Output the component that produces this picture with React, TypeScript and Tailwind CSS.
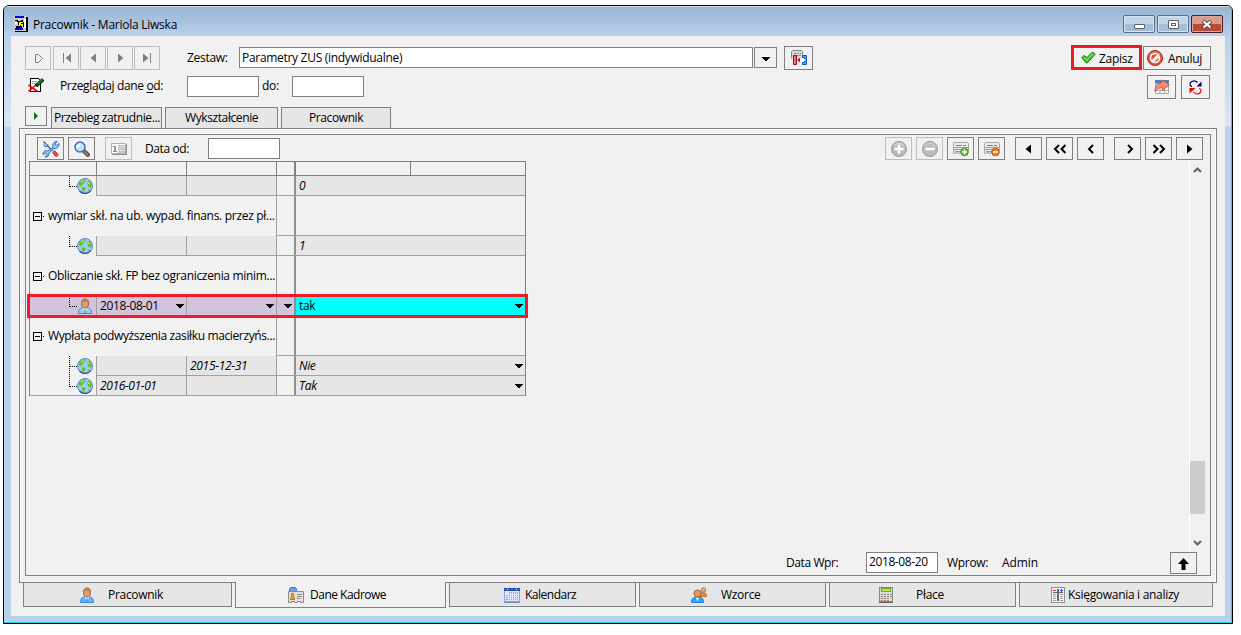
import React from "react";
import clsx from "clsx";

interface IconProps {
  className?: string;
}

interface ToolButtonProps {
  className?: string;
  disabled?: boolean;
  children?: React.ReactNode;
}

// 16x16 toolbar icon canvas
const Icon: React.FC<{ className?: string; children: React.ReactNode }> = ({
  className,
  children,
}) => (
  <svg
    width="16"
    height="16"
    viewBox="0 0 16 16"
    fill="none"
    className={clsx("shrink-0", className)}
  >
    {children}
  </svg>
);

const AppIcon = () => (
  <svg width="14" height="16" viewBox="0 0 14 16" shapeRendering="crispEdges">
    <path fill="#c8ccd0" d="M0 0h13v15H0z" />
    <path fill="#0000e0" d="M1 0h9v2H1zM1 12h8v2H1z" />
    <path fill="#000" d="M12 1h2v15H1v-1h11zM1 4h3v1H1zM3 5h4v1H3zM7 4h2v2H7zM9 6h1v5H9zM2 10h6v2H2zM4 6h1v3H4z" />
    <path fill="#fff" d="M1 6h2v2H1zM10 3h2v9h-2z" />
    <path fill="#ffff00" d="M5 6h4v4H5z" />
    <path fill="#000" d="M7 7h2v1H7zM6 9h1v1H6z" />
  </svg>
);

const GlobeIcon: React.FC<IconProps> = ({ className }) => (
  <Icon className={className}>
    <circle cx="8" cy="8" r="7.500" fill="#a4cbf6" stroke="#5b87d0" />
    <path d="M2.500 13a7.500 7.500 0 0 0 11.500-.5" stroke="#2846a8" strokeWidth="1.200" />
    <path
      fill="#62c232"
      d="M2 4.500 5 1.500l3.500-.3L9 3 7 4.500 6.800 6 5 7 3.500 8.500 1.500 7zM4.500 9.500 7 9l2 2-1.500 1.500-.5 2L5.500 14zM10.500 3.500l2-1L14 5l1 3-1.500 2-2.500-1.500L10.500 6.500zM11 11.500l2-.5-1 2-1.500.5z"
    />
    <path fill="#b8ec8a" d="M4 3.500 6 2l1.500.500-2.500 2zM11 4.500h1.500v1.500H11z" />
  </Icon>
);

const PersonIcon: React.FC<IconProps & { pale?: boolean }> = ({ className, pale }) => (
  <Icon className={className}>
    <path
      fill={pale ? "#9ad0ee" : "#5cb2fb"}
      stroke={pale ? "#4b8cb8" : "#3a8ee0"}
      d="M1.500 15.500c0-4 1.500-5.500 4-5.500h5c2.500 0 4 1.500 4 5.500z"
    />
    <path fill="#fff" d="m5.500 10 2.500 4 2.500-4z" />
    <path fill="#3a78b8" d="M7.500 11h1v4h-1z" />
    <ellipse cx="8" cy="5.500" rx="3.500" ry="4.500" fill="#d9a06e" stroke="#9c5f38" />
    <path fill="#b87848" d="M4.500 4C5 1.500 6.500 1 8 1s3 .5 3.500 3C9 3 7 3 4.500 4z" />
  </Icon>
);

const PeopleIcon = () => (
  <Icon>
    <path fill="#f08a32" stroke="#c05a18" strokeWidth=".8" d="M9 9.500c0-3 1-4 3-4s3.600 1 3.600 4z" />
    <circle cx="12.500" cy="3" r="2.200" fill="#e3b58a" stroke="#a0653d" strokeWidth=".8" />
    <path fill="#35a2f5" stroke="#2482d8" d="M.5 15.500c0-4 1.500-5 3.500-5h5c2 0 3.500 1 3.500 5z" />
    <path fill="#fff" d="m5 10.500 1.500 4 1.500-4z" />
    <circle cx="6.500" cy="6.500" r="3.500" fill="#d69c6b" stroke="#9c5f38" />
  </Icon>
);

const CardIcon = () => (
  <Icon>
    <path fill="#6f9cf2" stroke="#3f6fd8" d="M1.500 4.500V1.500l1-1h5l1 2v2z" />
    <path fill="#e0e0e0" stroke="#8c8c8c" d="M.5 4.500h15v11h-3v-1h-3v1h-3v-1h-3v1h-3z" />
    <path fill="#f8e0a0" d="M2 6h5v7H2z" />
    <circle cx="4.500" cy="7.500" r="1.200" stroke="#8c4f10" />
    <path fill="#e8a020" stroke="#a06010" strokeWidth=".8" d="M2.500 12.500c0-2 .7-3 2-3s2 1 2 3z" />
    <path stroke="#8c8c8c" d="M9 7.500h5M9 9.500h5M9 11.500h3" />
  </Icon>
);

const CalendarIcon = () => (
  <Icon>
    <path fill="#dce6f8" stroke="#8ba4d4" d="M.5 2.500h15v12H.5z" />
    <path fill="#2a50b0" d="M0 1h16v3H0z" />
    <path fill="#fff" d="M3 2h1v1H3zM12 2h1v1h-1z" />
    <path fill="#8fa6e0" d="M5 5h9v8H2V7h3z" />
    <path
      stroke="#eef3ff"
      strokeWidth=".8"
      d="M2 7.500h12M2 9.500h12M2 11.500h12M4.500 5v8M6.500 5v8M8.500 5v8M10.500 5v8M12.500 5v8"
    />
    <path fill="#6b86b8" d="M0 15h16v1H0z" />
  </Icon>
);

const CalculatorIcon = () => (
  <svg width="14" height="16" viewBox="0 0 14 16" fill="none" shapeRendering="crispEdges">
    <path fill="#dcdcdc" stroke="#888" d="M.5.5h13v14H.5z" />
    <path fill="#b4e850" stroke="#7ca030" d="M2.500 1.500h9v3h-9z" />
    <path stroke="#888" strokeDasharray="2 1" d="M2 7.500h11M2 9.500h11M2 11.500h9" />
    <path stroke="#d07838" strokeDasharray="2 1" d="M2 13.500h9" />
    <path stroke="#606060" d="M0 15.500h14" />
  </svg>
);

const LedgerIcon = () => (
  <svg width="14" height="16" viewBox="0 0 14 16" fill="none" shapeRendering="crispEdges">
    <path fill="#f4f4f4" stroke="#909090" d="M.5.5h13v15H.5z" />
    <path fill="#666" d="M6 2h2v12H6zM2 5h10v1H2z" />
    <path stroke="#a0a0a0" d="M2 7.500h3M2 9.500h3M2 11.500h3M2 13.500h3M9 7.500h3M9 9.500h3M9 11.500h3M9 13.500h3" />
    <path fill="#f02020" d="M2 3h3v1H2z" />
    <path fill="#1060f0" d="M10 2h1v1h1v1h-1v1h-1V4H9V3h1z" />
  </svg>
);

const SaveCheckIcon = () => (
  <svg width="15" height="13" viewBox="0 0 15 13" fill="none">
    <path
      fill="#43c82b"
      stroke="#187a12"
      strokeLinejoin="round"
      d="M.8 6.500 3 4.500l3 2 5.500-5.500 2.700 2.200L6.500 11.800H5z"
    />
    <path stroke="#98ea80" d="m2.500 6 3.300 3L12 2.500" />
  </svg>
);

const CancelIcon = () => (
  <Icon>
    <circle cx="8" cy="8" r="7.500" fill="#e2543c" stroke="#a82c1c" />
    <circle cx="8" cy="8" r="4.500" stroke="#fff" strokeWidth="1.600" />
    <path stroke="#fff" strokeWidth="1.600" d="m5 11 6-6M6.500 11.500l5-5" />
    <path stroke="#f49a88" strokeWidth=".8" d="M2.500 6A6 6 0 0 1 13 4.500" />
  </Icon>
);

const PrintSheetIcon = () => (
  <Icon>
    <path fill="#4f80b4" d="M1 1h14v4H1z" />
    <path fill="#f6f6f6" stroke="#a8a8a8" d="M1.500 4.500h13v10h-13zM6 5v9M10.500 5v9M1 11.500h13" />
    <path
      fill="#f88c70"
      stroke="#d04838"
      strokeWidth=".8"
      d="M1 12.500c0-6 2.500-8.500 6.500-8.500V.8L15.500 6l-7 5.300V8.500C5.500 8.500 3 9.500 1 12.500z"
    />
  </Icon>
);

const RefreshIcon = () => (
  <svg width="13" height="15" viewBox="0 0 13 15" fill="none">
    <path stroke="#000080" strokeWidth="1.200" d="M3 6.500C1 6.500.8 4.500 1.300 3 2 1.200 3.500.8 5 .8S7.500 1.500 8.500 2.500" />
    <path fill="#000080" d="M12.500 1.500v5h-5z" />
    <path stroke="#f00" strokeWidth="1.200" d="M10 8.500c2 0 2.200 2 1.700 3.200-.7 1.800-2.200 2.300-3.700 2.300s-2.500-.8-3.500-1.800" />
    <path fill="#f00" d="M.5 13.500v-5.500h6z" />
  </svg>
);

const NotesIcon = () => (
  <Icon>
    <path fill="#fff" stroke="#000" d="M2.500 1.500h8l2 2v11h-10z" shapeRendering="crispEdges" />
    <path stroke="#999" d="M4 4.500h5M4 6.500h4" />
    <path stroke="#f00" strokeWidth="1.600" d="m.5 8 9 6.500M8 8 .5 14.500" />
    <path stroke="#000" strokeWidth="3.400" d="m8 9 7-6.500" />
    <path stroke="#148a14" strokeWidth="2" d="m9 8 6-6" />
  </Icon>
);

const ToolsIcon = () => (
  <svg width="18" height="18" viewBox="0 0 18 18" fill="none">
    <path stroke="#b02020" strokeWidth="3.400" d="m11.500 11.500 4 4.500" />
    <path stroke="#f06060" strokeWidth="1.500" d="m11.500 11.500 4 4.500" />
    <path stroke="#506880" strokeWidth="1.500" d="m1.500 1.500 9 9.500" />
    <path
      fill="#8cc8fa"
      stroke="#1f62b8"
      strokeWidth=".9"
      d="M11 7.500c-1-3 .5-6 4-6L13 4l1.500 1.500L17 3.500c.5 3-1.500 5.500-5 5L7 13c.5 2.500-1.500 4.500-4 4l2-2.500L3.500 13 1 14.500C.5 12 3 10 5.500 11z"
    />
    <path fill="#8cc8fa" stroke="#1f62b8" strokeWidth=".9" d="M1.500 4.500 3.500 7 6 6 5 4" />
  </svg>
);

const SearchIcon = () => (
  <Icon>
    <path stroke="#5c4038" strokeWidth="4.200" strokeLinecap="round" d="m10.500 10.500 3.300 3.300" />
    <path stroke="#a88070" strokeWidth="1.800" strokeLinecap="round" d="m10.500 10.500 3.300 3.300" />
    <circle cx="6" cy="6" r="5" fill="#c0e4fc" stroke="#3870c0" strokeWidth="1.500" />
    <path fill="#eef9ff" d="M3 6c0-2 1-3 3-3l1 1-3 3z" />
  </Icon>
);

const CounterIcon = () => (
  <svg width="16" height="12" viewBox="0 0 16 12" fill="none" shapeRendering="crispEdges">
    <path fill="#fff" stroke="#b0b0b0" d="M.5.500h14v10H.5z" />
    <path fill="#c4c4c4" d="M7 2h7v8H7z" />
    <path stroke="#f0f0f0" strokeDasharray="1 1" d="M7 3.500h7M8 5.500h6M7 7.500h7" />
    <path fill="#909090" d="M3 3h2v5h1v1H2V8h1V4H2V3zM15 1h1v11H1v-1h14z" />
  </svg>
);

const ClipIcon = () => (
  <Icon>
    <path fill="#d8d8e0" stroke="#888" d="M.5 8.500v-7l1-1h9l1 1v7" />
    <path stroke="#888" strokeDasharray="2 1" d="M3 3.500h7M2 5.500h8" />
    <path fill="#e87868" stroke="#a01010" d="M2.500 5.500h3v9h-3z" />
    <path fill="#b01818" d="m6 10 3-2.200v4.400z" />
    <path fill="#50a0f0" stroke="#0a60c0" d="M11.500 5.500h4v9h-4v-2h2v-5h-2z" />
    <path fill="#fff" d="M11 8h1v1h2v2h-2v1h-1z" />
  </Icon>
);

const RoundIcon: React.FC<{ plus?: boolean }> = ({ plus }) => (
  <Icon>
    <circle cx="8" cy="8" r="7.500" fill="#bcbcbc" stroke="#989898" />
    <path stroke="#fff" strokeWidth="2.400" d={plus ? "M3.500 8h9M8 3.500v9" : "M3.500 8h9"} />
    <path stroke="#d8d8d8" d="M3 5a6 6 0 0 1 10 0" />
  </Icon>
);

const ListIcon: React.FC<{ plus?: boolean }> = ({ plus }) => (
  <Icon>
    <path fill="#ececec" stroke="#a8a8a8" d="M.5 12.500V3l1-1.500h13l1 1.500v7M.5 12.500h2v-1h2v1h2v-1h2" />
    <path stroke="#7f7f7f" d="M3 4.500h6M10 4.500h3" />
    <path stroke="#f07878" d="M1 6.500h14" />
    <path stroke="#8098e0" d="M1 8.500h10M2 10.500h6" />
    <circle
      cx="11.500"
      cy="11"
      r="3.800"
      fill={plus ? "#5cb82c" : "#ee8220"}
      stroke={plus ? "#4a9820" : "#b85c10"}
    />
    <path stroke="#fff" strokeWidth="1.500" d={plus ? "M9 11h5M11.500 8.500v5" : "M9 11h5"} />
  </Icon>
);

// filled media style arrow, points right unless flipped
const Triangle: React.FC<IconProps & { bar?: boolean; flip?: boolean }> = ({
  className,
  bar,
  flip,
}) => (
  <svg
    width="9"
    height="10"
    viewBox="0 0 9 10"
    fill="currentColor"
    className={clsx(flip && "-scale-x-100", className)}
  >
    <path d={bar ? "M0 .500v9L5.500 5z" : "M2 .500v9L7.500 5z"} />
    {bar && <path d="M7 0h1v10H7z" />}
  </svg>
);

const Chevron: React.FC<{ double?: boolean; flip?: boolean }> = ({ double, flip }) => (
  <svg
    width="14"
    height="10"
    viewBox="0 0 14 10"
    fill="none"
    stroke="#000"
    strokeWidth="2"
    className={clsx(flip && "-scale-x-100")}
  >
    <path d={double ? "m1.500 1 4 4-4 4M8 1l4 4-4 4" : "m5 1 4 4-4 4"} />
  </svg>
);

const DropArrow: React.FC<IconProps> = ({ className }) => (
  <svg
    width="8"
    height="4"
    viewBox="0 0 8 4"
    shapeRendering="crispEdges"
    className={clsx("shrink-0", className)}
  >
    <path d="M0 0h8v1H7v1H6v1H5v1H3V3H2V2H1V1H0z" />
  </svg>
);

const ToolButton: React.FC<ToolButtonProps> = ({ className, disabled, children }) => (
  <button
    className={clsx(
      "flex shrink-0 items-center justify-center border",
      disabled ? "border-[#bdbdbd] text-[#808080]" : "border-[#808080] text-black",
      className
    )}
  >
    {children}
  </button>
);

const Field: React.FC<{ className?: string; value?: string }> = ({ className, value }) => (
  <div
    className={clsx(
      "shrink-0 border border-[#808080] bg-white pl-[2px]",
      className
    )}
  >
    {value}
  </div>
);

const TitleBar = () => (
  <div className="flex h-[30px] shrink-0 items-start border-t border-[#d4e2f1] bg-linear-to-b from-[#9ab4d2] to-[#b9d1ea] pr-[8px] pl-[10px]">
    <div className="mt-[9px] flex">
      <AppIcon />
    </div>
    <span className="mt-[9px] ml-[5px] leading-[18px] tracking-[-0.25px]">
      Pracownik - Mariola Liwska
    </span>
    <div className="mt-[8px] ml-auto flex gap-[2px]">
      <div className="flex h-[18px] w-8 items-center justify-center rounded-[2px] border border-[#5b6f8a] bg-linear-to-b from-[#c3d5ea] from-50% to-[#a5bdd9] to-50% shadow-[inset_0_0_0_1px_#d6e4f3]">
        <div className="mt-[4px] h-[5px] w-[11px] rounded-[1px] border border-[#5a5f6b] bg-white" />
      </div>
      <div className="flex h-[18px] w-8 items-center justify-center rounded-[2px] border border-[#5b6f8a] bg-linear-to-b from-[#c3d5ea] from-50% to-[#a5bdd9] to-50% shadow-[inset_0_0_0_1px_#d6e4f3]">
        <div className="flex h-[9px] w-[11px] items-center justify-center rounded-[1px] border border-[#5a5f6b] bg-white">
          <div className="h-[3px] w-[5px] border border-[#5a5f6b]" />
        </div>
      </div>
      <div className="flex h-[18px] w-8 items-center justify-center rounded-[2px] border border-[#4f1c20] bg-linear-to-b from-[#d99a8f] from-50% to-[#bb4a35] to-50% shadow-[inset_0_0_0_1px_#e0a89c]">
        <svg width="12" height="9" viewBox="0 0 12 9" fill="none">
          <path stroke="#5a4a58" strokeWidth="4" d="m2 1 8 7M10 1 2 8" />
          <path stroke="#fff" strokeWidth="2.200" d="m2.500 1.500 7 6M9.500 1.500l-7 6" />
        </svg>
      </div>
    </div>
  </div>
);

const RecordToolbar = () => (
  <div className="mt-[9px] flex h-[25px] shrink-0 items-start pl-[14px]">
    <div className="mt-px flex gap-px">
      <ToolButton disabled className="mr-px h-6 w-[26px]">
        <svg width="9" height="9" viewBox="0 0 9 9" fill="none" stroke="#808080">
          <path d="M1.500.500h3l4 4-4 4h-3z" />
        </svg>
      </ToolButton>
      <ToolButton disabled className="h-6 w-[26px]">
        <Triangle bar flip />
      </ToolButton>
      <ToolButton disabled className="h-6 w-[26px]">
        <Triangle flip />
      </ToolButton>
      <ToolButton disabled className="h-6 w-[26px]">
        <Triangle />
      </ToolButton>
      <ToolButton disabled className="h-6 w-[26px]">
        <Triangle bar />
      </ToolButton>
    </div>
    <span className="ml-[27px] w-[52px] leading-[25px]">Zestaw:</span>
    <Field
      className="mt-[2px] h-[21px] w-[514px] leading-[19px]"
      value="Parametry ZUS (indywidualne)"
    />
    <ToolButton className="mt-[2px] ml-px h-[21px] w-[23px]">
      <DropArrow className="mt-[2px]" />
    </ToolButton>
    <ToolButton className="mt-px ml-[7px] h-6 w-[29px]">
      <ClipIcon />
    </ToolButton>
    <button className="ml-[258px] flex h-[25px] w-[71px] items-center border-3 border-[#ed1c24] pl-[7px]">
      <SaveCheckIcon />
      <span className="ml-[3px] pt-[3px]">Zapisz</span>
    </button>
    <ToolButton className="mt-px ml-px h-6 w-[68px] justify-start! pl-[3px]">
      <CancelIcon />
      <span className="ml-[5px] pt-px">Anuluj</span>
    </ToolButton>
  </div>
);

const DateFilter = () => (
  <div className="mt-[5px] flex h-6 shrink-0 items-start pl-[17px]">
    <div className="mt-[2px] flex w-8">
      <NotesIcon />
    </div>
    <span className="w-[127px] leading-[22px] tracking-[-0.35px]">
      Przeglądaj dane <u className="underline-offset-2">o</u>d:
    </span>
    <Field className="mt-px h-[21px] w-[72px]" />
    <span className="ml-[3px] w-[30px] leading-[22px]">do:</span>
    <Field className="mt-px h-[21px] w-[72px]" />
    <div className="ml-auto flex gap-[5px] pr-[15px]">
      <ToolButton className="h-6 w-[29px]">
        <PrintSheetIcon />
      </ToolButton>
      <ToolButton className="h-6 w-[29px]">
        <RefreshIcon />
      </ToolButton>
    </div>
  </div>
);

const TopTabs = () => (
  <div className="mt-[7px] flex h-[22px] shrink-0 items-start pl-[14px]">
    <ToolButton className="h-5 w-[22px]">
      <svg width="4" height="8" viewBox="0 0 4 8" className="mr-px mb-px">
        <path fill="#008000" d="M0 0v8l4-4z" />
      </svg>
    </ToolButton>
    <div className="mt-px ml-[4px] flex gap-[3px] leading-5">
      <div className="h-[21px] w-[111px] border border-b-0 border-[#808080] bg-[#e6e6e6] pl-[2px] tracking-[-0.38px]">
        Przebieg zatrudnie...
      </div>
      <div className="h-[21px] w-[113px] border border-b-0 border-[#808080] bg-[#e6e6e6] pl-[19px] tracking-[-0.4px]">
        Wykształcenie
      </div>
      <div className="h-[21px] w-[110px] border border-b-0 border-[#808080] bg-[#e6e6e6] pl-[27px] tracking-[-0.4px]">
        Pracownik
      </div>
    </div>
  </div>
);

const GridToolbar = () => (
  <div className="mt-[2px] flex h-[23px] shrink-0 items-start pr-[7px] pl-[11px]">
    <ToolButton className="h-[23px] w-[27px]">
      <ToolsIcon />
    </ToolButton>
    <ToolButton className="ml-[4px] h-[23px] w-[27px]">
      <SearchIcon />
    </ToolButton>
    <ToolButton disabled className="ml-[10px] h-[23px] w-[27px]">
      <CounterIcon />
    </ToolButton>
    <span className="ml-[13px] w-[63px] leading-6 tracking-[-0.4px]">Data od:</span>
    <Field className="mt-px h-[21px] w-[72px]" />
    <div className="ml-auto flex gap-[4px]">
      <ToolButton disabled className="h-[23px] w-[27px]">
        <RoundIcon plus />
      </ToolButton>
      <ToolButton disabled className="h-[23px] w-[27px]">
        <RoundIcon />
      </ToolButton>
      <ToolButton className="h-[23px] w-[27px]">
        <ListIcon plus />
      </ToolButton>
      <ToolButton className="h-[23px] w-[27px]">
        <ListIcon />
      </ToolButton>
    </div>
    <div className="ml-[10px] flex gap-[4px]">
      <ToolButton className="h-[23px] w-[27px]">
        <Triangle flip />
      </ToolButton>
      <ToolButton className="h-[23px] w-[27px]">
        <Chevron double flip />
      </ToolButton>
      <ToolButton className="h-[23px] w-[27px]">
        <Chevron flip />
      </ToolButton>
    </div>
    <div className="ml-[10px] flex gap-[4px]">
      <ToolButton className="h-[23px] w-[27px] pl-[5px]">
        <Chevron />
      </ToolButton>
      <ToolButton className="h-[23px] w-[27px]">
        <Chevron double />
      </ToolButton>
      <ToolButton className="h-[23px] w-[27px]">
        <Triangle />
      </ToolButton>
    </div>
  </div>
);

interface EntryRowProps {
  from?: string;
  to?: string;
  value: string;
  selected?: boolean;
  dropdown?: boolean;
  branch?: "end" | "middle";
  last?: boolean;
}

const EntryRow: React.FC<EntryRowProps> = ({
  from,
  to,
  value,
  selected,
  dropdown,
  branch = "end",
  last,
}) => (
  <div
    className={clsx(
      "flex h-5 leading-[18px]",
      selected ? "bg-[#d3c3dd]" : "italic"
    )}
  >
    <div
      className={clsx(
        "flex w-[66px] shrink-0 pl-[39px]",
        last && "border-b border-[#a0a0a0]"
      )}
    >
      <svg width="8" height="20" viewBox="0 0 8 20" stroke="#000" strokeDasharray="1 1">
        <path d={branch === "middle" ? "M.500 0v20" : "M.500 0v11"} />
        <path d="M1 10.500h7" />
      </svg>
      {selected ? <PersonIcon pale className="mt-[2px]" /> : <GlobeIcon className="mt-[2px]" />}
    </div>
    <div
      className={clsx(
        "flex w-[90px] shrink-0 items-center border-b border-l border-[#a0a0a0] pr-[2px] pl-[3px] tracking-[-0.38px]",
        !selected && "bg-[#e6e6e6]"
      )}
    >
      {from}
      {selected && <DropArrow className="ml-auto" />}
    </div>
    <div
      className={clsx(
        "flex w-[90px] shrink-0 items-center border-b border-l border-[#a0a0a0] pr-[2px] pl-[3px]",
        !selected && "bg-[#e6e6e6]"
      )}
    >
      {to}
      {selected && <DropArrow className="ml-auto" />}
    </div>
    <div className="flex w-[18px] shrink-0 items-center border-b border-l border-[#a0a0a0] pl-[7px]">
      {selected && <DropArrow />}
    </div>
    <div
      className={clsx(
        "flex flex-1 items-center border-b border-l-2 border-b-[#a0a0a0] border-l-[#909090] pr-[2px] pl-[3px]",
        selected ? "bg-[#00ffff]" : "bg-[#e6e6e6]"
      )}
    >
      {value}
      {dropdown && <DropArrow className="ml-auto" />}
    </div>
  </div>
);

const GroupRow: React.FC<{ label: string; labelClass?: string }> = ({ label, labelClass }) => (
  <div className="flex h-10">
    <div className="flex w-[246px] shrink-0 items-center pl-[3px] whitespace-nowrap">
      <svg
        width="13"
        height="9"
        viewBox="0 0 13 9"
        fill="none"
        stroke="#000"
        shapeRendering="crispEdges"
        className="mt-px shrink-0"
      >
        <path d="M.500.500h8v8h-8zM2 4.500h5M10 4.500h1" />
      </svg>
      <span className={clsx("ml-[2px]", labelClass)}>{label}</span>
    </div>
    <div className="w-[18px] shrink-0 border-b border-l border-[#a0a0a0]" />
    <div className="flex-1 border-b border-l-2 border-b-[#a0a0a0] border-l-[#909090]" />
  </div>
);

const ParameterGrid = () => (
  <div className="relative ml-[3px] h-[235px] w-[497px] border-x border-[#808080]">
    <div className="flex h-[15px] border-y border-[#808080]">
      <div className="w-[67px] border-r border-[#808080]" />
      <div className="w-[90px] border-r border-[#808080]" />
      <div className="w-[90px] border-r border-[#808080]" />
      <div className="w-[19px] border-r-2 border-[#808080]" />
      <div className="w-[115px] border-r border-[#808080]" />
    </div>
    <EntryRow value="0" />
    <GroupRow label="wymiar skł. na ub. wypad. finans. przez pł..." />
    <EntryRow value="1" />
    <GroupRow
      label="Obliczanie skł. FP bez ograniczenia minim..."
      labelClass="tracking-[-0.31px]"
    />
    <EntryRow from="2018-08-01" value="tak" selected dropdown />
    <GroupRow
      label="Wypłata podwyższenia zasiłku macierzyńs..."
      labelClass="tracking-[-0.37px]"
    />
    <EntryRow to="2015-12-31" value="Nie" dropdown branch="middle" />
    <EntryRow from="2016-01-01" value="Tak" dropdown last />
    {/* frame around the selected entry */}
    <div className="absolute top-[133px] -left-[3px] h-6 w-[501px] border-3 border-[#ed1c24]" />
  </div>
);

const ScrollBar = () => (
  <div className="mr-[5px] ml-auto flex h-[391px] w-4 flex-col items-center border-l border-white bg-[#f0f0f0]">
    <svg
      width="9"
      height="6"
      viewBox="0 0 9 6"
      fill="none"
      stroke="#606060"
      strokeWidth="2"
      className="mt-[6px]"
    >
      <path d="M1 5 4.500 1.500 8 5" />
    </svg>
    <div className="mt-[288px] h-[53px] w-[15px] bg-[#cdcdcd]" />
    <svg
      width="9"
      height="6"
      viewBox="0 0 9 6"
      fill="none"
      stroke="#606060"
      strokeWidth="2"
      className="mt-[26px]"
    >
      <path d="M1 1l3.500 3.500L8 1" />
    </svg>
  </div>
);

const EntryFooter = () => (
  <div className="flex h-[23px] shrink-0 items-start pl-[760px] leading-[22px]">
    <span className="w-20 tracking-[-0.4px]">Data Wpr:</span>
    <Field
      className="h-[21px] w-[72px] leading-[18px] tracking-[-0.4px]"
      value="2018-08-20"
    />
    <span className="ml-[9px] w-[55px]">Wprow:</span>
    <span className="tracking-[-0.1px]">Admin</span>
    <ToolButton className="mr-[13px] ml-auto h-[22px] w-[27px]">
      <svg width="11" height="12" viewBox="0 0 11 12" className="mt-[2px]">
        <path d="M5.500 0 11 6H7.500v6h-4V6H0z" />
      </svg>
    </ToolButton>
  </div>
);

interface BottomTabProps {
  className?: string;
  active?: boolean;
  icon: React.ReactNode;
  label: string;
  labelClass?: string;
}

const BottomTab: React.FC<BottomTabProps> = ({ className, active, icon, label, labelClass }) => (
  <div
    className={clsx(
      "flex shrink-0 items-center border-[#808080]",
      active ? "h-[26px] border-x border-b bg-[#f1f1f1]" : "h-[25px] border bg-[#e6e6e6]",
      className
    )}
  >
    {icon}
    <span className={labelClass}>{label}</span>
  </div>
);

const BottomTabs = () => (
  <div className="relative -mt-px flex shrink-0 items-start gap-[3px] pl-[12px]">
    <BottomTab
      className="w-[209px] pl-[55px]"
      icon={<PersonIcon />}
      label="Pracownik"
      labelClass="ml-[13px]"
    />
    <BottomTab
      active
      className="w-[211px] pl-[52px]"
      icon={<CardIcon />}
      label="Dane Kadrowe"
      labelClass="ml-[6px] tracking-[-0.5px]"
    />
    <BottomTab
      className="w-[187px] pl-[54px]"
      icon={<CalendarIcon />}
      label="Kalendarz"
      labelClass="ml-[5px] tracking-[-0.5px]"
    />
    <BottomTab
      className="w-[187px] pl-[51px]"
      icon={<PeopleIcon />}
      label="Wzorce"
      labelClass="ml-[14px]"
    />
    <BottomTab
      className="w-[187px] pl-[49px]"
      icon={<CalculatorIcon />}
      label="Płace"
      labelClass="ml-[23px]"
    />
    <BottomTab
      className="w-[194px] pl-[31px]"
      icon={<LedgerIcon />}
      label="Księgowania i analizy"
      labelClass="ml-[3px]"
    />
  </div>
);

const App = () => {
  return (
    <div className="h-[635px] w-[1241px] overflow-hidden bg-white pt-[5px] pl-[3px] font-['Open_Sans','Noto_Sans',sans-serif] text-[12px] tracking-[-0.3px] text-black">
      <div className="flex h-[619px] w-[1230px] flex-col overflow-hidden rounded-t-[6px] border border-black bg-[#b9d1ea]">
        <div className="flex flex-1 flex-col border-r border-b border-[#28cfe6]">
          <TitleBar />
          <div className="flex flex-1 flex-col bg-[linear-gradient(#b9d1ea,#d9e6f5_90px,#b9d1ea_91px)]">
            <div className="ml-[7px] flex h-[580px] w-[1214px] flex-col bg-[#f1f1f1]">
              <RecordToolbar />
              <DateFilter />
              <TopTabs />
              <div className="ml-[8px] flex h-[455px] w-[1198px] shrink-0 flex-col border border-[#808080] p-[5px] shadow-[inset_1px_1px_0_#fff,inset_-1px_0_0_#fff]">
                <div className="flex h-[442px] w-[1186px] flex-col border border-[#808080]">
                  <GridToolbar />
                  <div className="mt-px flex h-[391px] shrink-0 items-start">
                    <ParameterGrid />
                    <ScrollBar />
                  </div>
                  <EntryFooter />
                </div>
              </div>
              <BottomTabs />
            </div>
          </div>
        </div>
      </div>
    </div>
  );
};

export default App;
